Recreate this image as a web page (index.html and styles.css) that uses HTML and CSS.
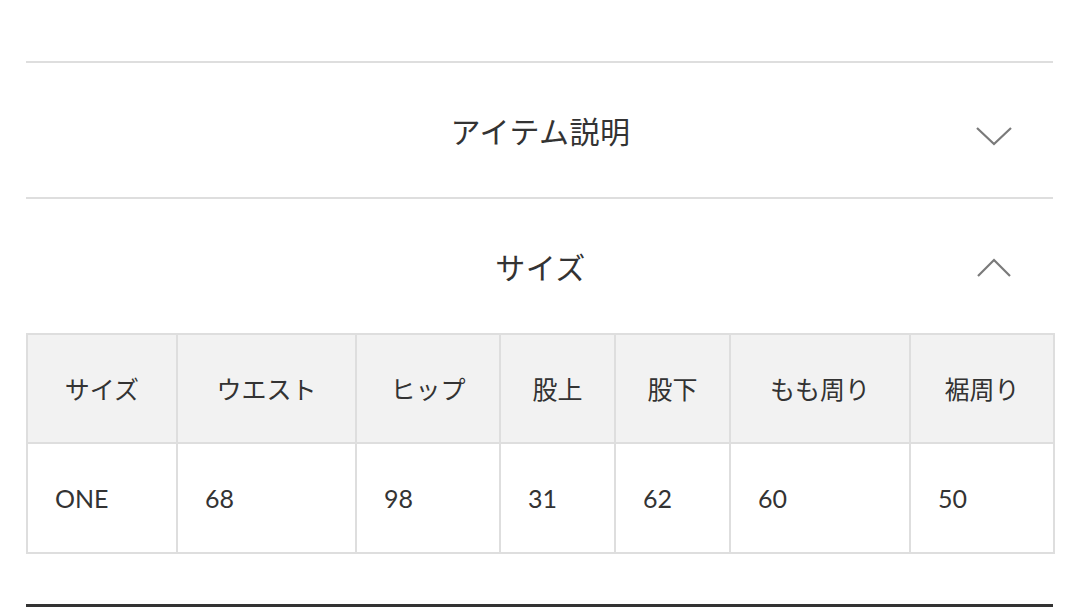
FILE: index.html
```html
<!DOCTYPE html>
<html lang="ja">
<head>
<meta charset="utf-8">
<link rel="stylesheet" href="styles.css">
</head>
<body>
<div class="page">
  <section class="acc">
    <div class="acc-head">
      <span class="acc-title">アイテム説明</span>
      <svg class="chev chev-down" width="38" height="22" viewBox="0 0 38 22"><polyline points="2,3 19,19 36,3" fill="none" stroke="#7a7a7a" stroke-width="2.2"/></svg>
    </div>
  </section>
  <section class="acc open">
    <div class="acc-head">
      <span class="acc-title">サイズ</span>
      <svg class="chev chev-up" width="38" height="22" viewBox="0 0 38 22"><polyline points="3,19 19,3 35,19" fill="none" stroke="#7a7a7a" stroke-width="2.2"/></svg>
    </div>
    <table class="size">
      <colgroup>
        <col class="c1"><col class="c2"><col class="c3"><col class="c4"><col class="c5"><col class="c6"><col class="c7">
      </colgroup>
      <thead>
        <tr><th>サイズ</th><th>ウエスト</th><th>ヒップ</th><th>股上</th><th>股下</th><th>もも周り</th><th>裾周り</th></tr>
      </thead>
      <tbody>
        <tr><td>ONE</td><td>68</td><td>98</td><td>31</td><td>62</td><td>60</td><td>50</td></tr>
      </tbody>
    </table>
  </section>
  <div class="bottom-rule"></div>
</div>
</body>
</html>
```
FILE: styles.css
```css
html, body {
  margin: 0;
  padding: 0;
  background: #fff;
}
body {
  font-family: "Lato", "Noto Sans CJK JP", sans-serif;
  color: #333;
}
.page {
  width: 1027px;
  margin-left: 26px;
  padding-top: 61px;
}
.acc {
  border-top: 2px solid #dedede;
}
.acc-head {
  height: 134px;
  display: flex;
  align-items: center;
  justify-content: center;
  position: relative;
}
.acc-title {
  font-family: "Noto Sans CJK JP", sans-serif;
  font-size: 30px;
  color: #333;
  letter-spacing: 0.5px;
  margin-left: 2px;
}
.chev {
  position: absolute;
  right: 40px;
}
.chev-down {
  top: 62px;
}
.chev-up {
  top: 58px;
}
.size {
  width: 1027px;
  border-collapse: collapse;
  table-layout: fixed;
  border: 2px solid #dedede;
}
.c1 { width: 150px; }
.c2 { width: 179px; }
.c3 { width: 144px; }
.c4 { width: 115px; }
.c5 { width: 115px; }
.c6 { width: 180px; }
.c7 { width: 144px; }
.size th, .size td {
  border: 2px solid #dedede;
  padding: 0;
  color: #333;
}
.size th {
  height: 105px;
  background: #f2f2f2;
  font-family: "Noto Sans CJK JP", sans-serif;
  font-weight: 400;
  font-size: 25px;
  text-align: center;
  padding-bottom: 2px;
}
.size td {
  height: 108px;
  font-family: "Lato", sans-serif;
  font-size: 25px;
  text-align: left;
  padding-left: 27px;
}
.bottom-rule {
  margin-top: 50px;
  height: 3px;
  background: #333;
}
```
